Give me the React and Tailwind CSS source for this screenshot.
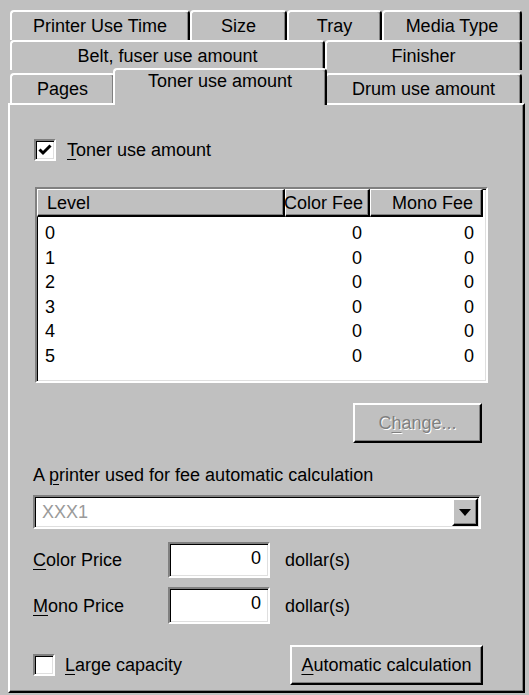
import React from "react";

const raised =
  "border-t-2 border-l-2 border-r-2 border-b-2 border-t-white border-l-white border-r-black border-b-black shadow-[inset_-1px_-1px_0_#808080]";
const sunken =
  "border-t-2 border-l-2 border-r-2 border-b-2 border-t-[#808080] border-l-[#808080] border-r-white border-b-white shadow-[inset_1px_1px_0_#000,inset_-1px_-1px_0_#dfdfdf]";
const headCell =
  "flex items-center whitespace-nowrap border-t border-l border-r-2 border-b-2 border-t-white border-l-white border-r-black border-b-black shadow-[inset_-1px_-1px_0_#808080]";

function U({ children }) {
  return <span className="underline underline-offset-[3px] decoration-1">{children}</span>;
}

function Tab({ w, children }) {
  return (
    <div
      className={`${w} h-[30px] self-end flex items-center justify-center rounded-t-[4px] border-t-2 border-l-2 border-r-2 border-t-white border-l-white border-r-black shadow-[inset_-1px_0_0_#808080] whitespace-nowrap`}
    >
      {children}
    </div>
  );
}

function CheckBox({ checked }) {
  return (
    <div className={`w-[22px] h-[22px] bg-white flex items-center justify-center ${sunken}`}>
      {checked && (
        <svg width="14" height="12" viewBox="0 0 14 12">
          <path d="M1.5 5.5 L5 9 L12.5 1.5" fill="none" stroke="#000" strokeWidth="3" />
        </svg>
      )}
    </div>
  );
}

const levels = [0, 1, 2, 3, 4, 5];

export default function App() {
  return (
    <div className="w-[529px] h-[695px] bg-[#c0c0c0] pt-[9px] pl-[8px] text-[18px] leading-[20px] text-black font-['Liberation_Sans',Arial,sans-serif]">
      <div className="w-[517px]">
        {/* tab rows */}
        <div className="flex h-[31px] pl-[2px]">
          <Tab w="w-[180px]">Printer Use Time</Tab>
          <Tab w="w-[97px]">Size</Tab>
          <Tab w="w-[95px]">Tray</Tab>
          <Tab w="w-[140px]">Media Type</Tab>
        </div>
        <div className="flex h-[30px] pl-[2px]">
          <Tab w="w-[315px]">Belt, fuser use amount</Tab>
          <Tab w="w-[197px]">Finisher</Tab>
        </div>
        <div className="relative z-10 flex items-end h-[33px] pl-[2px]">
          <Tab w="w-[105px]">Pages</Tab>
          <div className="relative z-20 w-[214px] h-[37px] -mb-[2px] -mx-[2px] bg-[#c0c0c0] flex items-start justify-center pt-[1px] rounded-t-[4px] border-t-2 border-l-2 border-r-2 border-t-white border-l-white border-r-black shadow-[inset_-1px_0_0_#808080] whitespace-nowrap">
            Toner use amount
          </div>
          <Tab w="w-[197px]">Drum use amount</Tab>
        </div>

        {/* page */}
        <div className={`relative h-[590px] flex flex-col ${raised}`}>
          <div className="mt-[34px] ml-[24px] flex items-center h-[22px] gap-[11px]">
            <CheckBox checked />
            <span>
              <U>T</U>oner use amount
            </span>
          </div>

          <div className={`mt-[26px] ml-[25px] w-[453px] h-[196px] bg-white flex flex-col ${sunken}`}>
            <div className="flex h-[28px] bg-[#c0c0c0] w-[446px]">
              <div className={`w-[248px] pl-[9px] ${headCell}`}>Level</div>
              <div className={`w-[85px] pr-[5px] justify-end ${headCell}`}>Color Fee</div>
              <div className={`w-[113px] pr-[8px] justify-end ${headCell}`}>Mono Fee</div>
            </div>
            <div className="pt-[4px]">
              {levels.map((n) => (
                <div key={n} className="flex h-[24.5px] items-center">
                  <div className="w-[248px] pl-[8px]">{n}</div>
                  <div className="w-[85px] pr-[8px] text-right">0</div>
                  <div className="w-[113px] pr-[9px] text-right">0</div>
                </div>
              ))}
            </div>
          </div>

          <div
            className={`mt-[20px] ml-[343px] w-[129px] h-[40px] flex items-center justify-center text-[#808080] [text-shadow:1px_1px_0_#fff] ${raised}`}
          >
            <span>
              C<U>h</U>ange...
            </span>
          </div>

          <div className="mt-[22px] ml-[23px]">
            A <U>p</U>rinter used for fee automatic calculation
          </div>

          <div className={`mt-[10px] ml-[23px] w-[448px] h-[34px] bg-white flex items-center justify-between ${sunken}`}>
            <span className="pl-[7px] text-[#9a9a9a]">XXX1</span>
            <div className={`w-[26px] h-[28px] mr-[1px] bg-[#c0c0c0] flex items-center justify-center ${raised}`}>
              <svg width="12" height="7" viewBox="0 0 12 7">
                <polygon points="0,0 12,0 6,7" fill="#000" />
              </svg>
            </div>
          </div>

          <div className="mt-[13px] ml-[23px] flex items-center h-[36px]">
            <div className="w-[135px]">
              <U>C</U>olor Price
            </div>
            <div className={`w-[102px] h-[36px] bg-white flex items-start justify-end pr-[7px] pt-[4px] ${sunken}`}>0</div>
            <div className="ml-[15px]">dollar(s)</div>
          </div>

          <div className="mt-[9px] ml-[23px] flex items-center h-[37px]">
            <div className="w-[135px]">
              <U>M</U>ono Price
            </div>
            <div className={`w-[102px] h-[37px] bg-white flex items-start justify-end pr-[7px] pt-[4px] ${sunken}`}>0</div>
            <div className="ml-[15px]">dollar(s)</div>
          </div>

          <div className="mt-[21px] ml-[23px] w-[450px] flex items-center justify-between h-[40px]">
            <div className="flex items-center gap-[10px]">
              <CheckBox />
              <span>
                <U>L</U>arge capacity
              </span>
            </div>
            <div className={`w-[193px] h-[40px] flex items-center justify-center ${raised}`}>
              <span>
                <U>A</U>utomatic calculation
              </span>
            </div>
          </div>
        </div>
      </div>
    </div>
  );
}
